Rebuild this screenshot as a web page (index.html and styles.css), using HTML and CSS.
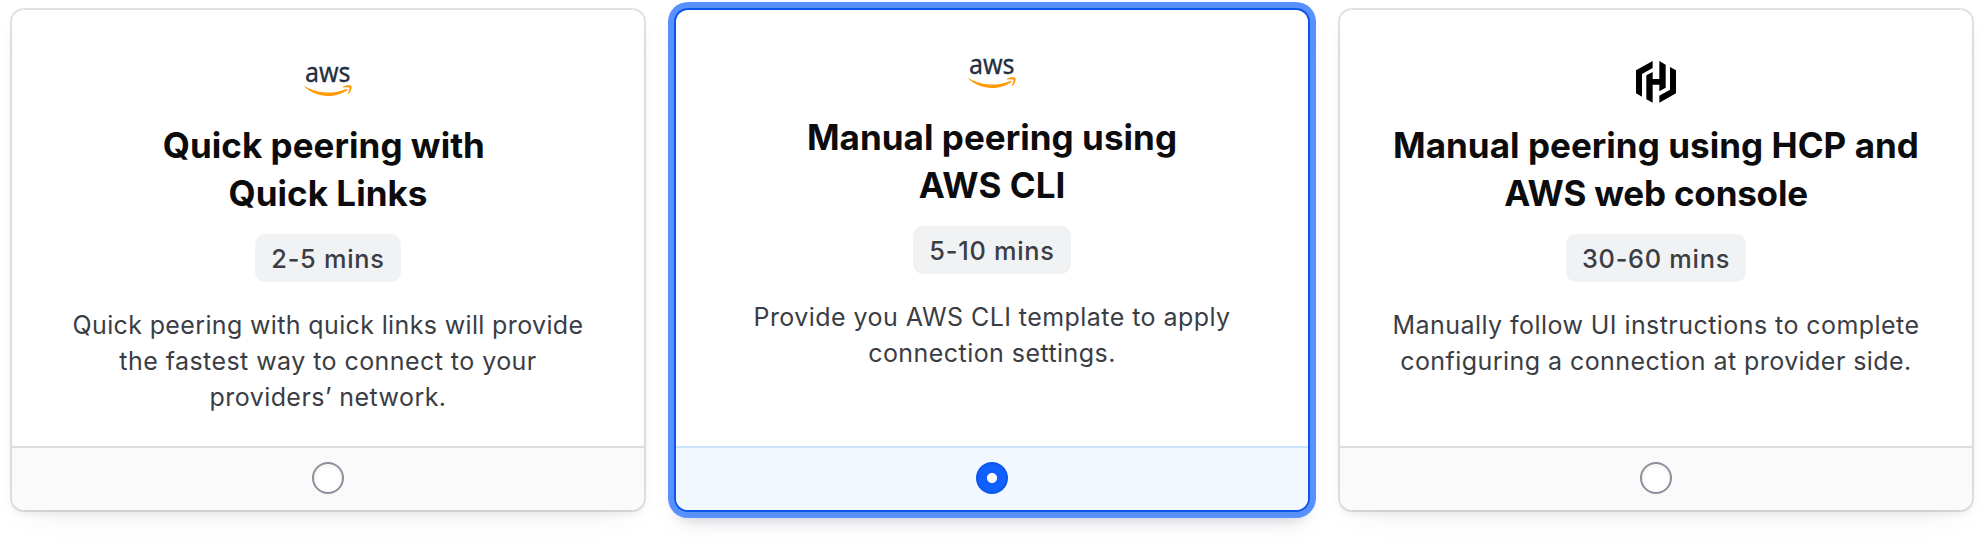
FILE: index.html
```html
<!DOCTYPE html>
<html lang="en">
<head>
<meta charset="utf-8">
<title>Choose a peering method</title>
<link rel="stylesheet" href="styles.css">
</head>
<body>
<svg class="sprite" aria-hidden="true">
  <symbol id="aws" viewBox="0 0 48 48">
    <text class="aws-word" x="0.9" y="24" textLength="45.6" lengthAdjust="spacingAndGlyphs">aws</text>
    <g transform="translate(0.2 9.6) scale(0.157)" fill="#f90">
      <path d="M273.5 143.7c-32.9 24.3-80.7 37.2-121.8 37.2-57.6 0-109.5-21.3-148.7-56.7-3.1-2.8-.3-6.6 3.4-4.4 42.4 24.6 94.7 39.5 148.8 39.5 36.5 0 76.6-7.6 113.5-23.2 5.5-2.5 10.2 3.6 4.8 7.6z"/>
      <path d="M287.2 128.1c-4.2-5.4-27.8-2.6-38.5-1.3-3.2.4-3.7-2.4-.8-4.5 18.8-13.2 49.7-9.4 53.3-5 3.6 4.5-1 35.4-18.6 50.2-2.7 2.3-5.3 1.1-4.1-1.9 4-9.9 12.9-32.2 8.7-37.5z"/>
    </g>
  </symbol>
  <symbol id="hashicorp" viewBox="36 24 144 144">
    <path d="M98 33v21L66 72v68l-18-10V61zM98 66v21h20V33l19 11v69l-19 11v-20H98v54l-19-10V76zM150 51l18 10v69l-50 28v-21l32-18z"/>
  </symbol>
</svg>
<main class="options">
  <label class="card">
    <span class="content">
      <svg class="logo"><use href="#aws"/></svg>
      <span class="title">Quick peering with&nbsp;<br>Quick Links</span>
      <span class="badge">2-5 mins</span>
      <span class="description"><span class="snug">Quick peering with quick links will provide</span><br>the fastest way to connect to your<br>providers’ network.</span>
    </span>
    <span class="control"><input class="radio" type="radio" name="method"></span>
  </label>
  <label class="card selected">
    <span class="content">
      <svg class="logo"><use href="#aws"/></svg>
      <span class="title">Manual peering using<br>AWS CLI</span>
      <span class="badge">5-10 mins</span>
      <span class="description">Provide you AWS CLI template to apply<br>connection settings.</span>
    </span>
    <span class="control"><input class="radio" type="radio" name="method" checked></span>
  </label>
  <label class="card">
    <span class="content">
      <svg class="logo"><use href="#hashicorp"/></svg>
      <span class="title">Manual peering using HCP and<br><span class="tight">AWS web console</span></span>
      <span class="badge">30-60 mins</span>
      <span class="description">Manually follow UI instructions to complete<br>configuring a connection at provider side.</span>
    </span>
    <span class="control"><input class="radio" type="radio" name="method"></span>
  </label>
</main>
</body>
</html>
```

FILE: styles.css
```css
* { box-sizing: border-box; }

body {
  margin: 0;
  background: #fff;
  color: #3b3d45;
  font-family: Inter, "Liberation Sans", sans-serif;
}

.sprite { display: none; }

.options {
  display: grid;
  grid-template-columns: repeat(3, 1fr);
  gap: 32px;
  padding: 10px 12px 36px;
}

.card {
  display: flex;
  flex-direction: column;
  height: 500px;
  border-radius: 12px;
  background: #fff;
  box-shadow: 0 0 0 2px #656a7630, 0 4px 6px #656a761a, 0 16px 32px -20px #656a7633;
}

.content {
  display: flex;
  flex: 1;
  flex-direction: column;
  align-items: center;
  padding-top: 48px;
  text-align: center;
}

.logo {
  width: 48px;
  height: 48px;
}

.aws-word {
  fill: #252f3e;
  font: 400 26.5px "Noto Sans", sans-serif;
  stroke: #252f3e;
  stroke-width: 0.3px;
}

.title {
  margin: 15px 0 17px;
  color: #0c0c0e;
  font-size: 35px;
  font-weight: 650;
  line-height: 48px;
  letter-spacing: 0.04px;
  white-space: nowrap;
}

.tight { letter-spacing: -0.2px; }

.badge {
  height: 48px;
  padding: 0 16px;
  border-radius: 10px;
  background: #f1f2f3;
  font-size: 25.3px;
  font-weight: 460;
  line-height: 50px;
  letter-spacing: 0.75px;
}

.description {
  margin-top: 25px;
  font-size: 25px;
  line-height: 36px;
  letter-spacing: 0.44px;
  white-space: nowrap;
}

.snug { letter-spacing: 0.36px; }

.control {
  display: flex;
  justify-content: center;
  height: 64px;
  padding-top: 14px;
  border-top: 2px solid #dcdde3;
  border-radius: 0 0 12px 12px;
  background: #fafafa;
}

.radio {
  appearance: none;
  width: 32px;
  height: 32px;
  margin: 0;
  border: 2px solid #8c909c;
  border-radius: 50%;
  background: #fff;
  box-shadow: inset 0 2px 4px #656a761a;
}

.radio:checked {
  border-color: #0c56e9;
  background: radial-gradient(circle, #fff 4.6px, #1060ff 5.4px);
  box-shadow: none;
}

.selected {
  box-shadow: 0 0 0 2px #0c56e9, 0 0 0 8px #5990ff, 0 10px 12px #656a7633, 0 16px 28px -8px #656a7633;
}

.selected .content { padding-top: 40px; }

.selected .control {
  border-top-color: #cce3fe;
  background: #f2f8ff;
}
```
